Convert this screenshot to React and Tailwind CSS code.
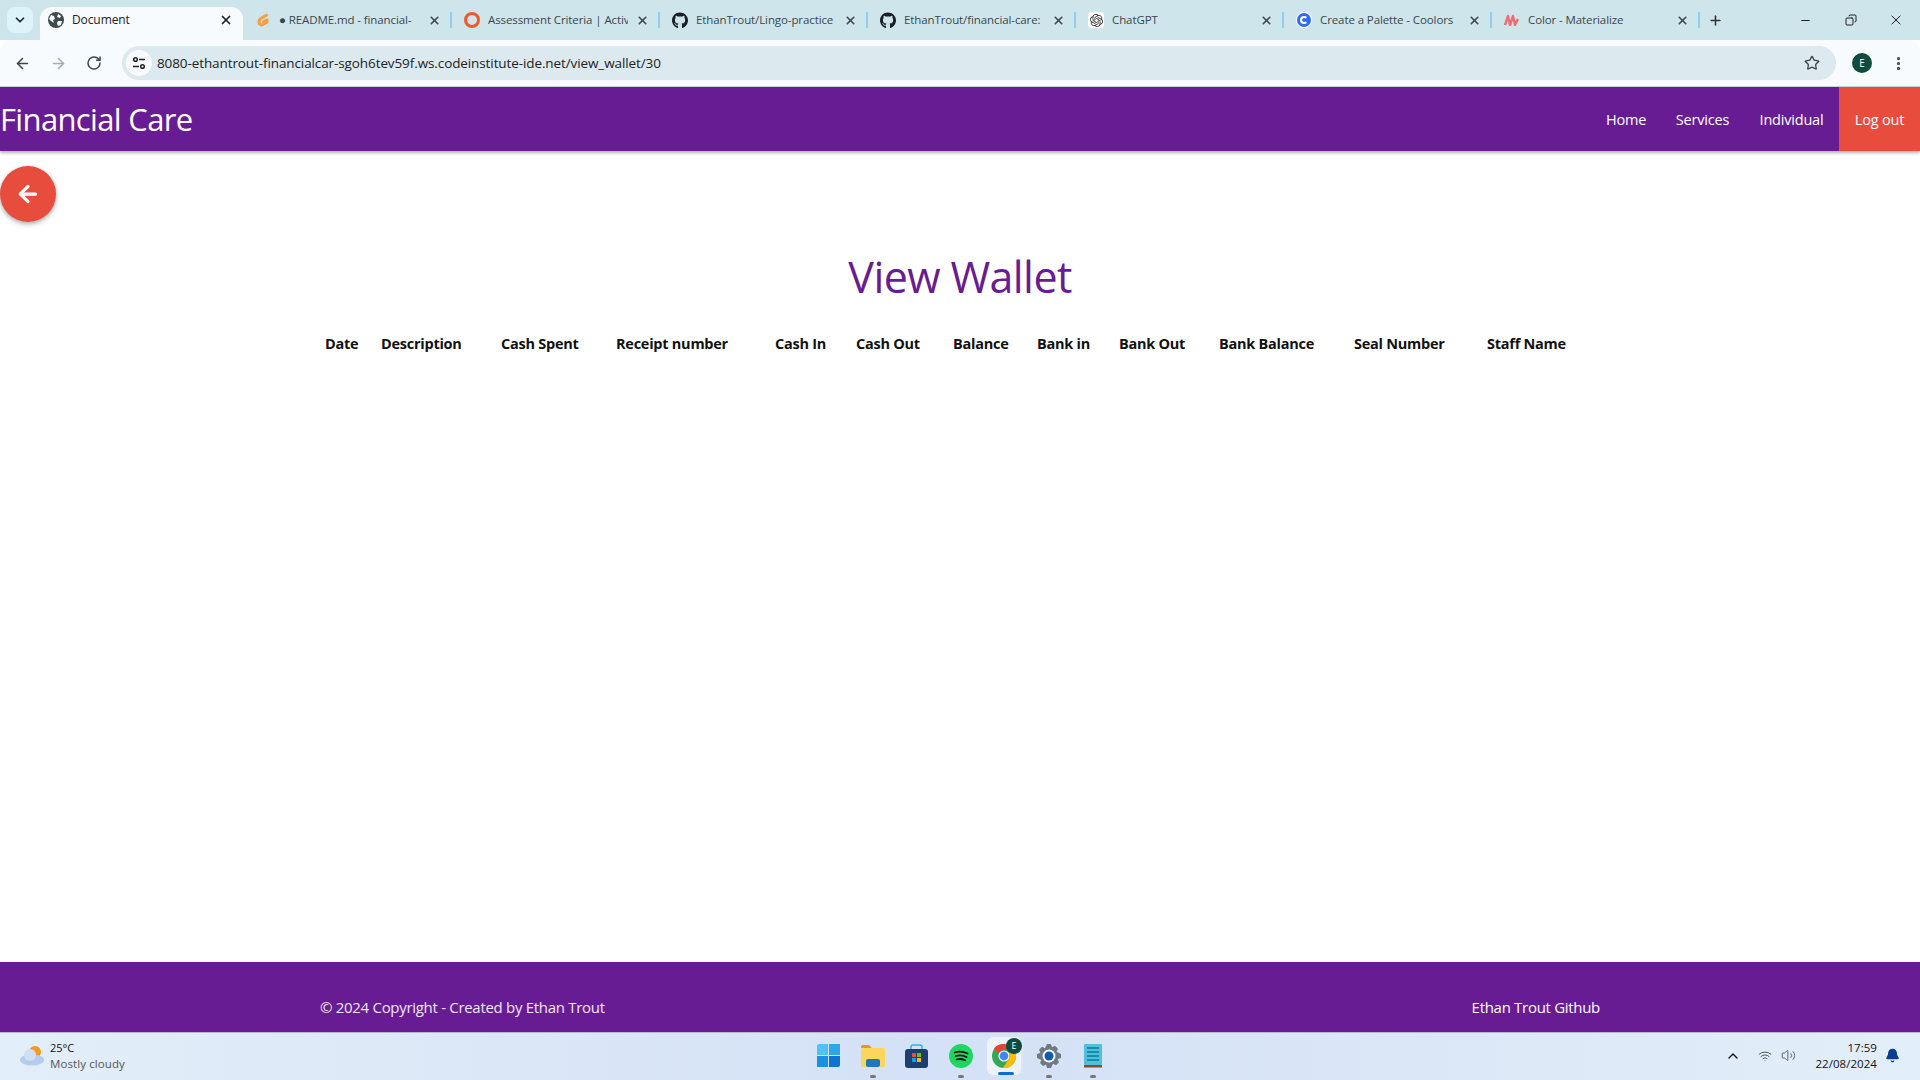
import React from 'react';
import { ArrowLeft, ArrowRight, RotateCw, X, Plus, Minus, Star, EllipsisVertical, ChevronDown, ChevronUp, Bell, Volume2, Wifi, Copy } from 'lucide-react';
import { FaGithub } from 'react-icons/fa';
import { SiOpenai } from 'react-icons/si';

const font = 'font-["Open_Sans",sans-serif]';

const GitIcon = () => <FaGithub size={17} className="text-[#1b1f23]" />;

const GlobeIcon = () => (
  <svg width="16" height="16" viewBox="0 0 16 16">
    <circle cx="8" cy="8" r="8" fill="#3d4a50" />
    <path d="M3 3l3 1 1 3-2 1 1 3-3-2-2-2zM10 2l3 2-1 2-3-1zM10 9l4 0-1 4-3 1-1-3z" fill="#f7fbfd" />
  </svg>
);

const GitpodIcon = () => (
  <svg width="16" height="18" viewBox="0 0 16 18" fill="none">
    <path d="M11.5 4.2 L7 6.8 C4.8 8 4 9 4 10.5 V11.5 C4 13.2 6 14.5 8 13.5 L12 11 V8.8 L8.5 10.8" stroke="#f59e42" strokeWidth="3" strokeLinecap="round" strokeLinejoin="round" />
  </svg>
);

const RingIcon = () => <div className="w-4 h-4 rounded-full border-[3px] border-[#f0592a]" />;

const OpenAiIcon = () => (
  <div className="w-4 h-4 bg-white rounded-sm flex items-center justify-center"><SiOpenai size={13} className="text-[#333]" /></div>
);

const CoolorsIcon = () => (
  <div className="w-4 h-4 rounded-full bg-white flex items-center justify-center">
    <div className="w-[14px] h-[14px] rounded-full bg-[#2f6bf0] flex items-center justify-center">
      <div className="w-[8px] h-[8px] rounded-full border-2 border-white border-r-transparent" />
    </div>
  </div>
);

const MaterializeIcon = () => (
  <svg width="16" height="12" viewBox="0 0 16 12" fill="none">
    <path d="M1 11 L4 2 L6 11 L9 2 L11 11 L14 5" stroke="#ee6e73" strokeWidth="2.4" strokeLinejoin="round" />
  </svg>
);

const tabs = [
  { title: '● README.md - financial-', icon: <GitpodIcon /> },
  { title: 'Assessment Criteria | Activ', icon: <RingIcon /> },
  { title: 'EthanTrout/Lingo-practice', icon: <GitIcon /> },
  { title: 'EthanTrout/financial-care:', icon: <GitIcon /> },
  { title: 'ChatGPT', icon: <OpenAiIcon /> },
  { title: 'Create a Palette - Coolors', icon: <CoolorsIcon /> },
  { title: 'Color - Materialize', icon: <MaterializeIcon /> },
];

const columns = [
  ['Date', 'w-[56px]'],
  ['Description', 'w-[120px]'],
  ['Cash Spent', 'w-[115px]'],
  ['Receipt number', 'w-[159px]'],
  ['Cash In', 'w-[81px]'],
  ['Cash Out', 'w-[97px]'],
  ['Balance', 'w-[84px]'],
  ['Bank in', 'w-[82px]'],
  ['Bank Out', 'w-[100px]'],
  ['Bank Balance', 'w-[135px]'],
  ['Seal Number', 'w-[133px]'],
  ['Staff Name', 'w-[138px]'],
];

function TabStrip() {
  return (
    <div className="h-10 bg-[#cfe5ec] flex items-end">
      <div className="w-10 h-[33px] self-start mt-[7px] flex justify-center">
        <div className="w-[26px] h-[26px] rounded-lg bg-[#dcf3fa] flex items-center justify-center text-[#1f2a30]">
          <ChevronDown size={14} strokeWidth={3} />
        </div>
      </div>
      <div className="w-[203px] h-[33px] bg-[#f7fbfd] rounded-t-xl flex items-center pl-2 pr-[10px] pb-[7px]">
        <GlobeIcon />
        <span className="ml-[8px] flex-1 text-[12px] tracking-[-0.1px] text-[#222]">Document</span>
        <X size={14} strokeWidth={3} className="text-[#222]" />
      </div>
      {tabs.map((t, i) => (
        <div key={i} className={`h-[33px] flex items-center pl-3 pb-[7px] ${i === 0 ? 'w-[209px]' : 'w-[208px]'}`}>
          <div className="w-4 h-4 flex items-center justify-center shrink-0">{t.icon}</div>
          <span className="ml-2 flex-1 min-w-0 overflow-hidden whitespace-nowrap text-[11.5px] tracking-[-0.1px] text-[#3c4549]">{t.title}</span>
          <X size={13} strokeWidth={3} className="text-[#3c4549] ml-2 mr-[9px] shrink-0" />
          <div className="w-[2px] h-[16px] bg-[#8fcfe6] shrink-0" />
        </div>
      ))}
      <div className="h-[33px] flex items-center pl-2 pb-[7px] text-[#333]">
        <Plus size={15} strokeWidth={2.5} />
      </div>
      <div className="flex-1 h-full flex items-center justify-end text-[#222]">
        <div className="w-[46px] flex justify-center"><Minus size={13} /></div>
        <div className="w-[46px] flex justify-center"><Copy size={12} className="-scale-x-100" /></div>
        <div className="w-[46px] flex justify-center pr-[2px]"><X size={16} strokeWidth={1.5} /></div>
      </div>
    </div>
  );
}

function Toolbar() {
  return (
    <div className="h-[47px] bg-[#f7fbfd] rounded-tl-xl rounded-tr-xl flex items-center border-b border-[#ccd5da]">
      <div className="w-[122px] flex items-center pl-[14px] gap-[19px] text-[#3c4549]">
        <ArrowLeft size={17} strokeWidth={2.2} />
        <ArrowRight size={17} strokeWidth={2.2} className="text-[#a3adb2]" />
        <RotateCw size={16} strokeWidth={2.2} />
      </div>
      <div className="w-[1714px] h-[34px] rounded-full bg-[#dce9ee] flex items-center pl-[4px] pr-4">
        <div className="w-[26px] h-[26px] rounded-full bg-[#f7fbfd] flex items-center justify-center">
          <svg width="14" height="14" viewBox="0 0 14 14" fill="none" stroke="#222" strokeWidth="1.5">
            <circle cx="3.5" cy="3.5" r="1.8" />
            <path d="M7 3.5h6M1 10.5h6" />
            <circle cx="10.5" cy="10.5" r="1.8" />
          </svg>
        </div>
        <span className="ml-[5px] flex-1 text-[13.5px] tracking-[-0.1px] text-[#222]">8080-ethantrout-financialcar-sgoh6tev59f.ws.codeinstitute-ide.net/view_wallet/30</span>
        <Star size={16} strokeWidth={2} className="text-[#3c4549]" />
      </div>
      <div className="flex-1 flex items-center pl-4 gap-[18px]">
        <div className="w-5 h-5 rounded-full bg-[#0f4c3f] text-white text-[10px] flex items-center justify-center">E</div>
        <EllipsisVertical size={17} strokeWidth={2.5} className="text-[#3c4549]" />
      </div>
    </div>
  );
}

function Navbar() {
  return (
    <nav className="h-16 bg-[#681c94] flex items-center justify-between text-white shadow-[0_2px_3px_rgba(0,0,0,0.3)] relative">
      <a className="text-[31px] leading-none tracking-[-0.65px] mt-[1px]">Financial Care</a>
      <ul className="flex h-full text-[14.5px] tracking-[-0.2px]">
        <li className="w-[70px] flex items-center justify-center pt-[1px]">Home</li>
        <li className="w-[83px] flex items-center justify-center pt-[1px]">Services</li>
        <li className="w-[95px] flex items-center justify-center pt-[1px]">Individual</li>
        <li className="w-[81px] flex items-center justify-center pt-[1px] bg-[#e74c3c]">Log out</li>
      </ul>
    </nav>
  );
}

function ChromeIcon() {
  return (
    <svg width="24" height="24" viewBox="0 0 24 24">
      <circle cx="12" cy="12" r="12" fill="#34a853" />
      <path d="M12 0a12 12 0 0 1 10.4 6H12a6 6 0 0 0-5.6 3.8L2 4.4A12 12 0 0 1 12 0z" fill="#ea4335" />
      <path d="M22.4 6A12 12 0 0 1 11 24l5.2-8.2A6 6 0 0 0 16.5 8z" fill="#fbbc04" />
      <circle cx="12" cy="12" r="5.6" fill="#fff" />
      <circle cx="12" cy="12" r="4.4" fill="#4285f4" />
    </svg>
  );
}

function Taskbar() {
  return (
    <div className="h-12 bg-gradient-to-r from-[#e2eef8] via-[#d4e1f6] to-[#e2eef8] border-t border-[#b8b8c8] flex items-center justify-between relative">
      <div className="flex items-center pl-[19px] w-[300px] -mt-[2px]">
        <svg width="25" height="21" viewBox="0 0 25 21">
          <circle cx="16" cy="7" r="6" fill="#f59a1c" />
          <ellipse cx="13" cy="15" rx="12" ry="5.5" fill="#b5cdec" />
          <circle cx="11" cy="10" r="6" fill="#cfe0f5" />
        </svg>
        <div className="ml-[6px] text-[11px] leading-[16px]">
          <div className="text-[#111]">25°C</div>
          <div className="text-[#555] text-[11.5px] tracking-[0.1px]">Mostly cloudy</div>
        </div>
      </div>

      <div className="absolute left-[817px] top-0 h-full flex items-center -mt-[1px]">
        <div className="w-[23px] h-[23px] grid grid-cols-2 gap-[1px] mr-[21px]">
          <div className="bg-[#4cc2f5] rounded-tl-[2px]" />
          <div className="bg-[#2fa6ea]" />
          <div className="bg-[#1d8fe0]" />
          <div className="bg-[#0f74cf] rounded-br-[2px]" />
        </div>
        <div className="w-6 mr-[20px] relative h-full flex items-center">
          <svg width="24" height="22" viewBox="0 0 24 22">
            <path d="M0 2a2 2 0 0 1 2-2h6l3 3h-11z" fill="#d99f18" />
            <rect x="0" y="3" width="24" height="19" rx="2" fill="#fbd65a" />
            <rect x="5" y="14" width="14" height="8" rx="2" fill="#1d78bd" />
          </svg>
          <div className="absolute bottom-[1px] left-[9px] w-[6px] h-[3px] rounded-full bg-[#777]" />
        </div>
        <div className="w-[23px] mr-[21px] flex items-center">
          <svg width="23" height="24" viewBox="0 0 23 24">
            <path d="M6 5V3a2 2 0 0 1 2-2h7a2 2 0 0 1 2 2v2" fill="none" stroke="#2bb6e8" strokeWidth="1.5" />
            <rect x="0" y="5" width="23" height="19" rx="3" fill="#1c3f70" />
            <rect x="7" y="9" width="4" height="4" fill="#f25022" />
            <rect x="12" y="9" width="4" height="4" fill="#7fba00" />
            <rect x="7" y="14" width="4" height="4" fill="#00a4ef" />
            <rect x="12" y="14" width="4" height="4" fill="#ffb900" />
          </svg>
        </div>
        <div className="w-6 mr-[14px] relative h-full flex items-center">
          <svg width="24" height="24" viewBox="0 0 24 24">
            <circle cx="12" cy="12" r="12" fill="#1ed760" />
            <path d="M5.5 8.5c4.5-1.3 9-1 13 1M6.5 12c3.8-1 7.5-.8 11 1M7.5 15.5c3-.8 6-.6 8.6.8" fill="none" stroke="#111" strokeWidth="1.8" strokeLinecap="round" />
          </svg>
          <div className="absolute bottom-[1px] left-[9px] w-[6px] h-[3px] rounded-full bg-[#777]" />
        </div>
        <div className="w-[34px] h-[38px] mr-[16px] rounded-md bg-[#edf2fb] shadow-[2px_0_0_#dfe6f3] relative flex items-center justify-center">
          <ChromeIcon />
          <div className="absolute top-[1px] right-[-1px] w-4 h-4 rounded-full bg-[#0f4c3f] text-white text-[9px] flex items-center justify-center">E</div>
          <div className="absolute bottom-0 left-[11px] w-4 h-[3px] rounded-full bg-[#0b6fd0]" />
        </div>
        <div className="w-6 mr-[23px] relative h-full flex items-center">
          <svg width="24" height="24" viewBox="0 0 24 24">
            <path d="M10 0h4l1 3.2 3-1.4 3 3-1.4 3L24 10v4l-3.4 1.2 1.4 3-3 3-3-1.4L14 24h-4l-1-3.4-3 1.4-3-3 1.4-3L0 14v-4l3.4-1.2-1.4-3 3-3 3 1.4z" fill="#6f7a85" />
            <circle cx="12" cy="12" r="6.5" fill="#fff" />
            <circle cx="12" cy="12" r="4.5" fill="#0f5bb0" />
          </svg>
          <div className="absolute bottom-[1px] left-[9px] w-[6px] h-[3px] rounded-full bg-[#777]" />
        </div>
        <div className="w-[18px] relative h-full flex items-center">
          <svg width="18" height="25" viewBox="0 0 18 25">
            <rect x="0" y="1" width="18" height="21" rx="1" fill="#4fc0dc" />
            <path d="M3 5h12M3 9h12M3 13h12M3 17h12" stroke="#0d7a98" strokeWidth="1.6" />
            <rect x="0" y="22" width="18" height="2.5" fill="#8a4b20" />
          </svg>
          <div className="absolute bottom-[1px] left-[6px] w-[6px] h-[3px] rounded-full bg-[#777]" />
        </div>
      </div>

      <div className="flex items-center text-[#111] -mt-[2px]">
        <ChevronUp size={16} strokeWidth={2} className="mr-[17px]" />
        <Wifi size={14} strokeWidth={1.5} className="mr-[9px] text-[#444]" />
        <Volume2 size={15} strokeWidth={1.3} className="mr-[1px] text-[#444]" />
        <div className="w-[80px] text-right text-[11.5px] tracking-[0.05px] leading-[16px] mr-2">
          <div>17:59</div>
          <div>22/08/2024</div>
        </div>
        <Bell size={15} fill="#0b3d91" className="text-[#0b3d91] mr-[20px]" />
      </div>
    </div>
  );
}

export default function App() {
  return (
    <div className={`h-[1080px] flex flex-col overflow-hidden bg-white ${font}`}>
      <TabStrip />
      <Toolbar />
      <Navbar />
      <main className="flex-1 bg-white">
        <button className="mt-[15px] w-14 h-14 rounded-full bg-[#e74c3c] text-white flex items-center justify-center shadow-[0_2px_5px_rgba(0,0,0,0.35)]">
          <ArrowLeft size={26} strokeWidth={3} />
        </button>
        <h1 className="mt-[27px] text-center text-[43px] leading-[56px] tracking-[-0.6px] text-[#681c94]">View Wallet</h1>
        <table className="ml-[310px] mt-[13px] table-fixed w-[1300px]">
          <thead>
            <tr>
              {columns.map(([name, w]) => (
                <th key={name} className={`${w} px-[15px] py-[15px] text-left text-[14.5px] leading-[22px] tracking-[-0.25px] font-bold text-[#111] whitespace-nowrap`}>{name}</th>
              ))}
            </tr>
          </thead>
        </table>
      </main>
      <footer className="h-[70px] bg-[#681c94] text-white flex items-center justify-between px-80 pt-[21px] text-[15px] tracking-[-0.3px]">
        <span className="text-[#f0e6f5]">© 2024 Copyright - Created by Ethan Trout</span>
        <span>Ethan Trout Github</span>
      </footer>
      <Taskbar />
    </div>
  );
}
